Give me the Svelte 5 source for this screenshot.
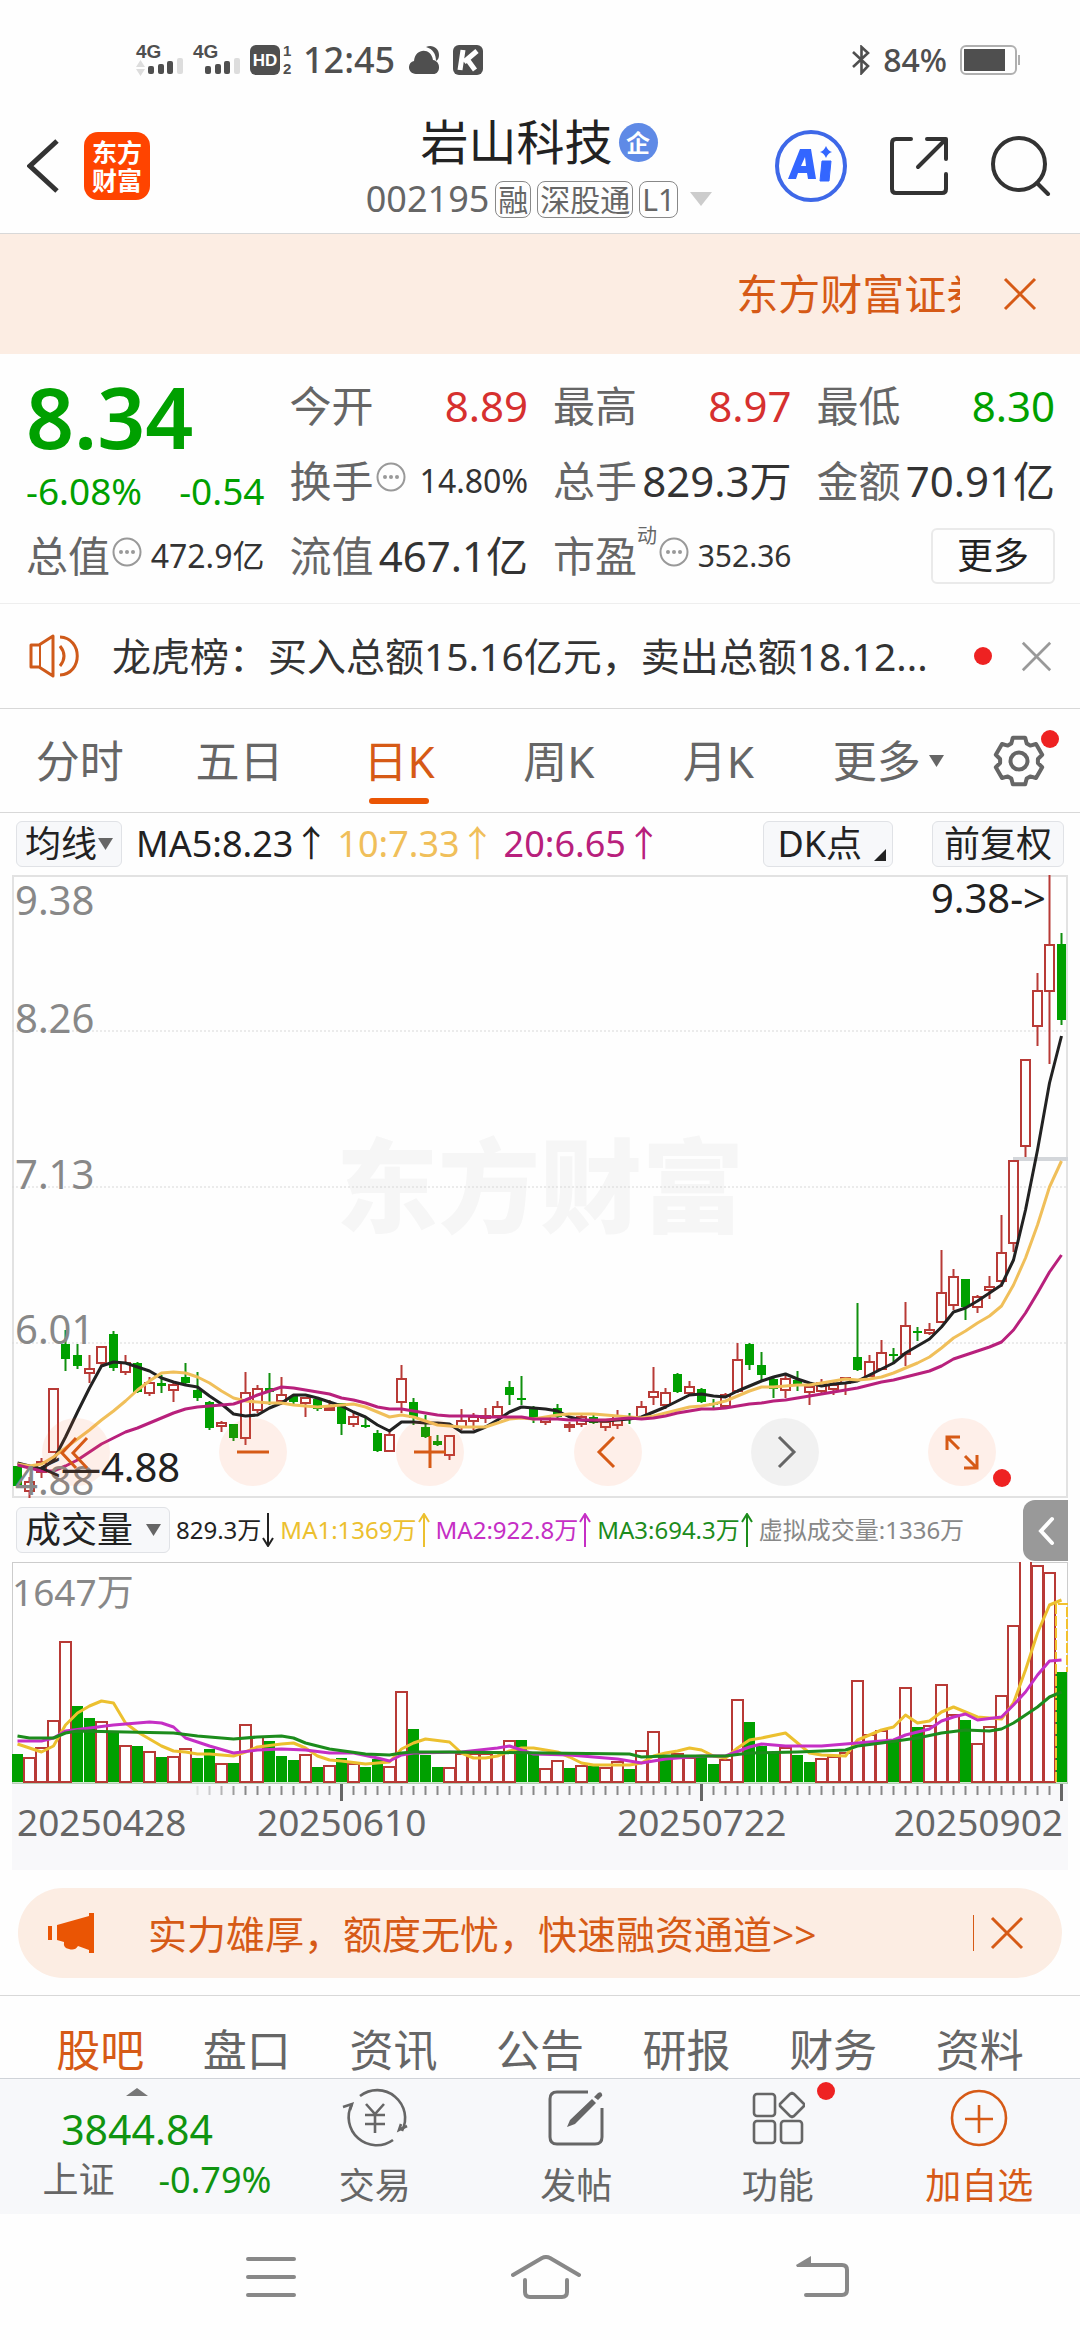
<script>
  let period = '日K';
  let section = '股吧';
  let line = '均线';
  let indicator = '成交量';

  const periods = ['分时', '五日', '日K', '周K', '月K', '更多'];
  const sections = ['股吧', '盘口', '资讯', '公告', '研报', '财务', '资料'];

  const STEP = 12;
  const cx = i => 5.5 + STEP * i;

  // high, body top, body bottom, low (chart units), r = rise, g = fall
  const candles = `
    591 591 611 611 g|602 607 616 623 r|583 587 597 603 r|514 514 577 577 r|455 469 484 496 g|469 480 491 494 g
    480 494 498 508 r|472 472 488 492 r|456 459 493 496 g|480 488 497 500 r|487 488 517 518 g|502 508 518 521 r
    500 508 511 518 g|508 510 515 527 r|488 502 508 511 g|497 515 523 526 g|526 527 553 555 g|546 548 551 557 r
    549 549 563 566 g|497 518 563 570 r|510 514 535 538 r|498 513 517 530 g|502 520 526 530 r|519 521 527 529 g
    522 523 528 542 r|522 524 534 536 g|525 533 535 536 r|528 528 549 560 g|537 542 549 552 r|542 550 552 553 g
    555 558 576 577 g|557 560 576 576 r|490 504 527 538 r|523 527 543 550 g|540 552 562 563 g|560 566 570 571 g
    561 561 580 585 r|534 546 552 555 r|538 542 546 555 r|533 541 543 548 r|526 532 541 543 r|506 512 520 530 g
    501 523 525 530 g|531 533 545 548 g|542 543 547 550 r|529 533 542 543 g|547 550 552 557 r|540 542 549 552 r
    540 542 548 549 g|545 547 552 556 r|535 541 550 554 r|538 543 545 549 g|526 532 542 543 r|492 517 522 530 r
    513 518 530 534 r|498 499 517 518 g|506 512 518 521 r|513 514 527 528 g|524 528 530 533 g|518 520 531 532 r
    468 485 516 518 r|468 469 490 495 g|477 490 500 505 g|502 504 514 523 g|500 504 515 523 r|496 505 511 516 g
    510 512 517 530 r|504 508 516 520 r|507 510 514 520 r|502 503 508 520 r|428 482 495 496 g|480 487 501 502 r
    465 478 494 495 r|473 479 481 487 g|427 451 479 491 r|452 456 458 466 g|448 455 458 460 r|375 418 447 448 r
    394 402 430 435 r|404 404 432 445 g|420 422 432 438 r|401 412 415 424 r|340 378 406 412 r|286 286 368 377 r
    185 185 271 282 r|98 116 151 171 r|0 70 116 189 r|58 69 145 150 g`
    .trim()
    .split(/[|\n]/)
    .map((row, i) => {
      const [high, top, bottom, low, side] = row.trim().split(' ');
      return { x: cx(i), high: +high, top: +top, bottom: +bottom, low: +low, up: side === 'r' };
    });

  const ma5 = [588, 591, 594, 585, 562, 537, 513, 491, 487, 488, 492, 496, 503, 507, 510, 512, 521, 529, 539, 541, 540, 533, 528, 520, 520, 523, 527, 531, 537, 542, 550, 556, 547, 547, 548, 548, 549, 557, 557, 552, 545, 537, 532, 533, 534, 536, 542, 545, 546, 546, 545, 544, 542, 537, 532, 526, 520, 519, 521, 522, 516, 511, 506, 502, 499, 504, 508, 511, 509, 508, 506, 500, 494, 488, 478, 471, 464, 452, 437, 433, 426, 418, 410, 385, 335, 275, 208, 161];
  const ma10 = [589, 591, 589, 582, 573, 564, 555, 545, 536, 526, 515, 506, 498, 497, 498, 502, 508, 516, 523, 526, 527, 528, 528, 530, 531, 532, 531, 530, 529, 532, 537, 542, 540, 542, 546, 550, 551, 552, 552, 552, 548, 544, 543, 544, 542, 540, 539, 539, 539, 540, 541, 542, 543, 541, 538, 535, 532, 531, 529, 526, 521, 516, 512, 512, 511, 510, 510, 508, 506, 504, 505, 504, 502, 498, 493, 488, 482, 473, 463, 456, 448, 441, 431, 410, 383, 350, 312, 286];
  const ma20 = [590, 593, 596, 596, 591, 585, 577, 569, 563, 557, 553, 548, 543, 538, 534, 532, 531, 530, 529, 525, 520, 516, 512, 513, 515, 517, 519, 523, 525, 528, 532, 534, 534, 536, 538, 540, 541, 541, 541, 542, 542, 542, 542, 544, 544, 544, 545, 545, 545, 545, 544, 543, 544, 543, 541, 538, 536, 534, 534, 533, 531, 529, 528, 526, 525, 523, 521, 519, 517, 515, 513, 510, 507, 505, 502, 499, 496, 491, 484, 480, 476, 472, 467, 455, 438, 418, 397, 380];

  const volumeTops = [192, 195, 185, 158, 79, 144, 156, 159, 169, 183, 184, 189, 195, 194, 186, 196, 187, 201, 201, 162, 174, 179, 194, 198, 192, 205, 203, 196, 201, 205, 197, 204, 129, 167, 193, 205, 205, 191, 191, 191, 189, 178, 178, 190, 206, 198, 206, 203, 204, 205, 199, 207, 188, 169, 194, 191, 195, 195, 202, 197, 137, 160, 184, 191, 185, 193, 200, 196, 194, 190, 118, 172, 168, 177, 125, 165, 163, 122, 152, 158, 181, 164, 133, 63, -4, 3, 10, 110];
  const volumeSides = 'grrrrggrgrgrgrrggrgrrgggrgrgrggrrgggrrrrrrggrrgrgrrgrrgrrggrrgggrggrrrrrrgrgrrrgrrrrrrrg';

  // [index, y] pairs
  const vma1 = [[0, 182], [2, 190], [3, 184], [4, 163], [5, 151], [6, 144], [7, 139], [8, 141], [9, 161], [10, 170], [12, 184], [13, 189], [14, 190], [15, 192], [16, 192], [18, 194], [19, 190], [20, 185], [22, 182], [23, 181], [24, 186], [25, 194], [26, 198], [27, 199], [29, 202], [31, 200], [32, 187], [33, 181], [34, 177], [36, 180], [37, 191], [38, 196], [39, 196], [40, 194], [41, 189], [42, 186], [43, 186], [44, 188], [45, 190], [46, 195], [47, 201], [48, 203], [51, 203], [52, 201], [53, 194], [54, 191], [55, 189], [56, 186], [57, 188], [58, 194], [59, 196], [60, 186], [61, 178], [62, 176], [64, 171], [65, 181], [66, 191], [67, 193], [69, 194], [70, 178], [71, 173], [72, 168], [73, 165], [74, 153], [75, 161], [76, 159], [77, 150], [78, 145], [79, 150], [80, 155], [82, 157], [83, 141], [84, 108], [85, 71], [86, 43], [87, 38]];
  const vma2 = [[0, 179], [2, 179], [3, 176], [4, 169], [6, 166], [8, 163], [11, 160], [12, 161], [13, 165], [14, 176], [16, 184], [18, 191], [20, 188], [22, 187], [24, 188], [26, 191], [28, 191], [30, 196], [31, 199], [32, 193], [33, 191], [37, 190], [40, 186], [41, 184], [42, 188], [43, 192], [46, 193], [48, 195], [50, 197], [52, 201], [54, 197], [57, 194], [59, 194], [61, 185], [62, 182], [64, 184], [67, 184], [70, 181], [73, 178], [74, 173], [76, 167], [77, 159], [78, 155], [79, 152], [80, 158], [82, 155], [83, 143], [84, 130], [85, 113], [86, 99], [87, 98]];
  const vma3 = [[0, 174], [1, 176], [3, 176], [4, 171], [5, 169], [13, 171], [15, 174], [18, 177], [20, 175], [22, 174], [23, 176], [24, 181], [26, 187], [29, 192], [31, 193], [32, 191], [33, 190], [36, 190], [44, 191], [51, 192], [52, 195], [54, 194], [59, 194], [61, 191], [65, 190], [69, 188], [70, 184], [72, 181], [75, 176], [77, 171], [79, 168], [81, 169], [82, 167], [83, 161], [84, 153], [85, 145], [86, 135], [87, 130]];

  const points = pairs => pairs.map(([i, y]) => `${cx(i)},${y}`).join(' ');
  const series = values => points(values.map((y, i) => [i, y]));

  const majorTicks = [27, 57, 87];
  const ticks = Array.from({ length: 73 }, (_, n) => n + 15);

  function gear() {
    const out = [];
    for (let k = 0; k < 6; k++) {
      [[-15, 24], [15, 24], [24, 19], [36, 19]].forEach(([deg, r]) => {
        const a = ((k * 60 - 90 + deg) * Math.PI) / 180;
        out.push(`${(26 + r * Math.cos(a)).toFixed(1)},${(26 + r * Math.sin(a)).toFixed(1)}`);
      });
    }
    return out.join(' ');
  }
</script>

{#snippet more()}
  <svg class="hint" viewBox="0 0 30 30" aria-hidden="true">
    <circle cx="15" cy="15" r="13.5" fill="none" stroke="#999" stroke-width="2" />
    <circle cx="9" cy="15" r="2" /><circle cx="15" cy="15" r="2" /><circle cx="21" cy="15" r="2" />
  </svg>
{/snippet}

{#snippet cross()}
  <svg class="cross" viewBox="0 0 34 34" aria-hidden="true">
    <path d="M2 2 32 32M32 2 2 32" fill="none" stroke="currentColor" stroke-width="3" />
  </svg>
{/snippet}

{#snippet arrow(down)}
  <svg class="trend" viewBox="0 0 12 34" aria-hidden="true">
    <path d={down ? 'M6 0V33M1 25 6 33 11 25' : 'M6 34V1M1 9 6 1 11 9'} fill="none" stroke="currentColor" stroke-width="2" />
  </svg>
{/snippet}

{#snippet signal(roaming)}
  <svg class="signal" viewBox="0 0 48 34" aria-hidden="true">
    <text x="0" y="15" font-size="19" font-weight="700" fill="#4f4f4f">4G</text>
    {#if roaming}<path d="M0 24 4.500 17 9 24ZM0 26 4.500 33 9 26Z" fill="#ddd" />{/if}
    <rect x="12" y="23" width="6" height="8" rx="2" fill="#4f4f4f" />
    <rect x="22" y="21" width="6" height="10" rx="2" fill="#4f4f4f" />
    <rect x="31" y="18" width="6" height="13" rx="2" fill="#4f4f4f" />
    <rect x="41" y="15" width="6" height="16" rx="2" fill="#ddd" />
  </svg>
{/snippet}

<div class="app">
  <div class="status">
    <div class="status-side">
      {@render signal(true)}
      {@render signal(false)}
      <svg class="hd" viewBox="0 0 44 34" aria-hidden="true">
        <rect y="2" width="30" height="30" rx="6" fill="#4f4f4f" />
        <text x="15" y="23" font-size="17" font-weight="700" fill="#fff" text-anchor="middle">HD</text>
        <text x="33" y="13" font-size="15" font-weight="700" fill="#4f4f4f">1</text>
        <text x="33" y="31" font-size="15" font-weight="700" fill="#4f4f4f">2</text>
      </svg>
      <span class="clock">12:45</span>
      <svg class="app-icon" viewBox="0 0 30 30" aria-hidden="true">
        <path d="M17 2c6-3 13 1 13 8 0 3-1 5-3 6 0-7-3-12-10-14z" fill="#4f4f4f" />
        <path d="M7 29c-9 0-9-12-2-13C6 3 22 2 24 15c8 1 8 14 0 14z" fill="#4f4f4f" />
      </svg>
      <svg class="app-icon" viewBox="0 0 30 30" aria-hidden="true">
        <rect width="30" height="30" rx="6" fill="#4f4f4f" />
        <path d="M10 5 7 25M24 6 11 17M14 14 22 25" stroke="#fff" stroke-width="5" fill="none" />
      </svg>
    </div>
    <div class="status-side right">
      <svg class="bt" viewBox="0 0 18 30" aria-hidden="true">
        <path d="M1 7 16 21 9.500 28V2L16 8 1 22" fill="none" stroke="#4f4f4f" stroke-width="2.600" />
      </svg>
      <span class="battery-text">84%</span>
      <svg class="battery" viewBox="0 0 60 30" aria-hidden="true">
        <rect x="1" y="1" width="55" height="28" rx="5" fill="#fff" stroke="#b0b0b0" stroke-width="2" />
        <rect x="4" y="4" width="41" height="22" fill="#4f4f4f" />
        <rect x="58" y="10" width="2" height="10" fill="#b0b0b0" />
      </svg>
    </div>
  </div>

  <header>
    <div class="head-left">
      <button aria-label="返回">
        <svg class="back" viewBox="0 0 32 54"><path d="M30 2 3 27 30 52" fill="none" stroke="#333" stroke-width="5" /></svg>
      </button>
      <a class="logo" href="#home">东方<br />财富</a>
    </div>
    <div class="head-mid">
      <h1>岩山科技<span class="badge">企</span></h1>
      <p class="code">
        002195<span class="tag">融</span><span class="tag">深股通</span><span class="tag">L1</span>
        <svg class="caret" viewBox="0 0 22 16" aria-hidden="true"><path d="M0 1H22L11 15Z" fill="#ccc" /></svg>
      </p>
    </div>
    <div class="head-right">
      <button class="ai" aria-label="Ai">
        <svg viewBox="0 0 72 72">
          <circle cx="36" cy="36" r="34" fill="none" stroke="#3e68e8" stroke-width="4" />
          <path d="M13 49 25 19H36L41 49H33L32 43H23L21 49ZM26 36H31L30 27Z" fill="#3366ff" fill-rule="evenodd" />
          <path d="M47 31H56L54 51H45Z" fill="#3366ff" stroke="#3366ff" stroke-linejoin="round" />
          <path d="M51 16Q53 21 57 22 53 23 51 28 49 23 45 22 49 21 51 16Z" fill="#3366ff" />
        </svg>
      </button>
      <button aria-label="分享">
        <svg class="share" viewBox="0 0 58 58">
          <path d="M21 2H6Q2 2 2 6V52Q2 56 6 56H52Q56 56 56 52V37M37 2H56V22M55 3 28 30" fill="none" stroke="#333" stroke-width="4" stroke-linecap="round" stroke-linejoin="round" />
        </svg>
      </button>
      <button aria-label="搜索">
        <svg class="search" viewBox="0 0 60 60">
          <circle cx="28" cy="28" r="26" fill="none" stroke="#333" stroke-width="4" />
          <path d="M46 47 57 58" stroke="#333" stroke-width="4" stroke-linecap="round" />
        </svg>
      </button>
    </div>
  </header>

  <div class="promo">
    <div class="marquee">东方财富证券</div>
    <button aria-label="关闭">{@render cross()}</button>
  </div>

  <section class="quote">
    <div class="price">
      <strong>8.34</strong>
      <div class="change"><span>-6.08%</span><span>-0.54</span></div>
    </div>
    <div class="cell"><span>今开</span><b class="rise">8.89</b></div>
    <div class="cell"><span>最高</span><b class="rise">8.97</b></div>
    <div class="cell"><span>最低</span><b class="fall">8.30</b></div>
    <div class="cell"><span>换手</span>{@render more()}<b class="small">14.80%</b></div>
    <div class="cell"><span>总手</span><b>829.3万</b></div>
    <div class="cell"><span>金额</span><b>70.91亿</b></div>
    <div class="cell"><span>总值</span>{@render more()}<b class="small">472.9亿</b></div>
    <div class="cell"><span>流值</span><b>467.1亿</b></div>
    <div class="cell"><span>市盈</span><i class="sup">动</i>{@render more()}<b class="tiny">352.36</b></div>
    <button class="more">更多</button>
  </section>

  <div class="news">
    <svg class="speaker" viewBox="0 0 52 44" aria-hidden="true">
      <path d="M2 11H10L24 2V42L10 33H2ZM31 12Q39 22 31 32M31 3C54 4 54 40 31 41" fill="none" stroke="#cf5a1a" stroke-width="3" stroke-linejoin="round" />
      <path d="M11 11V33" stroke="#cf5a1a" stroke-width="2" />
    </svg>
    <a href="#news">龙虎榜：买入总额15.16亿元，卖出总额18.12...</a>
    <span class="dot"></span>
    <button aria-label="关闭">{@render cross()}</button>
  </div>

  <nav class="periods">
    {#each periods as name}
      <button class:active={period === name} class:menu-tab={name === '更多'} on:click={() => (period = name)}>
        {name}{#if name === '更多'}<svg class="drop" viewBox="0 0 15 12" aria-hidden="true"><path d="M0 0H15L7.500 12Z" fill="#666" /></svg>{/if}
      </button>
    {/each}
    <button class="settings" aria-label="设置">
      <svg viewBox="0 0 52 52">
        <polygon points={gear()} fill="none" stroke="#666" stroke-width="4" stroke-linejoin="round" />
        <circle cx="26" cy="26" r="8.500" fill="none" stroke="#666" stroke-width="4" />
      </svg>
      <span class="dot"></span>
    </button>
  </nav>

  <div class="legend">
    <label class="picker">
      <select bind:value={line} aria-label="主图指标"><option>均线</option></select>
      <svg class="drop" viewBox="0 0 15 12" aria-hidden="true"><path d="M0 0H15L7.500 12Z" fill="#666" /></svg>
    </label>
    <span class="ma5">MA5:8.23↑</span>
    <span class="ma10">10:7.33↑</span>
    <span class="ma20">20:6.65↑</span>
    <button class="chip dk">DK点<svg viewBox="0 0 12 12" aria-hidden="true"><path d="M12 0V12H0Z" fill="#222" /></svg></button>
    <button class="chip">前复权</button>
  </div>

  <div class="chart">
    <svg viewBox="0 0 1056 623" role="img" aria-label="日K线">
      <text class="watermark" x="324" y="350">东方财富</text>
      <rect x="1" y="1" width="1054" height="621" fill="none" stroke="#e2e2e2" stroke-width="2" />
      {#each [156, 312, 468] as y}
        <path d="M0 {y}H1056" stroke="#d8d8d8" stroke-width="1" stroke-dasharray="2 2" />
      {/each}
      <path d="M1001 284H1056" stroke="#d3d6da" stroke-width="4" />
      {#each candles as c}
        {#if c.up}
          <path d="M{c.x} {c.high}V{c.top}M{c.x} {c.bottom}V{c.low}" stroke="#b83a36" stroke-width="2" />
          <rect x={c.x - 4.5} y={c.top} width="9" height={c.bottom - c.top} fill="none" stroke="#b83a36" stroke-width="2" />
        {:else}
          <path d="M{c.x} {c.high}V{c.low}" stroke="#10900f" stroke-width="2" />
          <rect x={c.x - 4.5} y={c.top} width="9" height={c.bottom - c.top} fill="#00a000" />
        {/if}
      {/each}
      <polyline points={series(ma5)} stroke="#222" />
      <polyline points={series(ma10)} stroke="#f0bf5a" />
      <polyline points={series(ma20)} stroke="#b8207c" />
      <g class="axis">
        <text x="3" y="40">9.38</text>
        <text x="3" y="158">8.26</text>
        <text x="3" y="314">7.13</text>
        <text x="3" y="469">6.01</text>
        <text x="3" y="620">4.88</text>
      </g>
      <g class="mark">
        <text x="1034" y="38" text-anchor="end">9.38-&gt;</text>
        <text x="26" y="607">&lt;—4.88</text>
      </g>
    </svg>
    <div class="tools">
      <button aria-label="最左"><svg viewBox="0 0 68 68"><path d="M34 20 20 35 34 50M45 20 31 35 45 50" /></svg></button>
      <button aria-label="缩小"><svg viewBox="0 0 68 68"><path d="M18 34H50" /></svg></button>
      <button aria-label="放大"><svg viewBox="0 0 68 68"><path d="M18 34H50M34 18V50" /></svg></button>
      <button aria-label="左移"><svg viewBox="0 0 68 68"><path d="M40 19 25 34 40 49" /></svg></button>
      <button class="off" aria-label="右移"><svg viewBox="0 0 68 68"><path d="M28 19 43 34 28 49" /></svg></button>
      <button aria-label="全屏">
        <svg viewBox="0 0 68 68"><path d="M19 32V19H32M19 19 31 31M49 37V50H36M49 50 37 38" /></svg>
        <span class="dot"></span>
      </button>
    </div>
  </div>

  <div class="vol-legend">
    <label class="picker wide">
      <select bind:value={indicator} aria-label="副图指标"><option>成交量</option></select>
      <svg class="drop" viewBox="0 0 15 12" aria-hidden="true"><path d="M0 0H15L7.500 12Z" fill="#666" /></svg>
    </label>
    <span>829.3万{@render arrow(true)}</span>
    <span class="v1">MA1:1369万{@render arrow(false)}</span>
    <span class="v2">MA2:922.8万{@render arrow(false)}</span>
    <span class="v3">MA3:694.3万{@render arrow(false)}</span>
    <span class="virtual">虚拟成交量:1336万</span>
    <button class="drawer" aria-label="展开">
      <svg viewBox="0 0 45 61"><path d="M29 19 18 31 29 43" fill="none" stroke="#fff" stroke-width="4" stroke-linecap="round" /></svg>
    </button>
  </div>

  <div class="volume">
    <svg viewBox="0 0 1056 222" role="img" aria-label="成交量">
      <rect x="0.500" y="0.500" width="1055" height="221" fill="none" stroke="#ccc" />
      <path d="M0 221H1056" stroke="#9fce9f" />
      {#each volumeTops as top, i}
        {#if volumeSides[i] === 'r'}
          <rect x={cx(i) - 5.5} y={top + 1} width="11" height={219 - top} fill="#fff" stroke="#b83a36" stroke-width="2" />
        {:else}
          <rect x={cx(i) - 5.5} y={top} width="11" height={220 - top} fill="#00a000" />
        {/if}
      {/each}
      <path d="M1044 220V42H1055V110" fill="none" stroke="#f2c12e" stroke-width="2" stroke-dasharray="10 2" />
      <polyline points={points(vma1)} stroke="#ecc02f" />
      <polyline points={points(vma2)} stroke="#c52fc5" />
      <polyline points={points(vma3)} stroke="#1c8c1c" />
      <text class="vol-max" x="0" y="44">1647万</text>
    </svg>
    <svg class="dates" viewBox="0 0 1056 86">
      {#each ticks as i}
        {#if majorTicks.includes(i)}
          <path d="M{cx(i)} 0V17" stroke="#666" stroke-width="3" />
        {:else}
          <path d="M{cx(i)} 2V11" stroke="#888" stroke-width="2" opacity={Math.min(1, (i - 14) / 5)} />
        {/if}
      {/each}
      <text x="5" y="52">20250428</text>
      <text x="245" y="52">20250610</text>
      <text x="605" y="52">20250722</text>
      <text x="1051" y="52" text-anchor="end">20250902</text>
    </svg>
  </div>

  <div class="notice">
    <svg class="horn" viewBox="0 0 46 40" aria-hidden="true">
      <path d="M0 13H4V27H0ZM9 12 41 3V0H46V40H41V37L30 33Q27 38 21 36 15 35 16 29L9 27Z" fill="#ea5504" />
    </svg>
    <a href="#margin">实力雄厚，额度无忧，快速融资通道&gt;&gt;</a>
    <button aria-label="关闭">{@render cross()}</button>
  </div>

  <nav class="sections">
    {#each sections as name}
      <button class:active={section === name} on:click={() => (section = name)}>{name}</button>
    {/each}
  </nav>

  <footer>
    <button class="index">
      <svg class="up" viewBox="0 0 22 8" aria-hidden="true"><path d="M0 8 11 0 22 8Z" fill="#777" /></svg>
      <span class="points">3844.84</span>
      <span class="row"><span>上证</span><em>-0.79%</em></span>
    </button>
    <button class="item">
      <svg viewBox="0 0 66 60" fill="none" stroke="#666" stroke-width="2.600">
        <path d="M18 8A28 28 0 0 1 60 43M51 52A28 28 0 0 1 10 16" />
        <path d="M1 19 10 16 8 22M65 38 57 42 59 36M24 16 33 26 42 16M23 27H43M23 36H43M33 26V45" />
      </svg>
      交易
    </button>
    <button class="item">
      <svg viewBox="0 0 56 60">
        <path d="M40 4H9Q2 4 2 11V49Q2 56 9 56H47Q54 56 54 49V20" fill="none" stroke="#666" stroke-width="3" />
        <path d="M44 11 48 15 27 36 19 39 22 32ZM46 9 50 5Q53 3 54 6 55 8 53 9L50 12Z" fill="#666" />
      </svg>
      发帖
    </button>
    <button class="item">
      <svg viewBox="0 0 54 60" fill="none" stroke="#666" stroke-width="2.600" stroke-linejoin="round">
        <rect x="3" y="6" width="21" height="22" rx="3" /><rect x="3" y="33" width="21" height="22" rx="3" /><rect x="30" y="33" width="21" height="22" rx="3" />
        <path d="M39 6 41 5 43 6 53 16V18L43 28 41 29 39 28 29 18V16Z" />
      </svg>
      功能
      <span class="dot"></span>
    </button>
    <button class="item add">
      <svg viewBox="0 0 60 60" fill="none" stroke="#d65a16" stroke-width="2.600">
        <circle cx="30" cy="30" r="27" /><path d="M16 31H44M30 17V45" />
      </svg>
      加自选
    </button>
  </footer>

  <div class="system">
    <button aria-label="菜单"><svg class="menu" viewBox="0 0 50 42"><path d="M2 3H48M2 21H48M2 39H48" /></svg></button>
    <button aria-label="主页"><svg class="home" viewBox="0 0 70 44"><path d="M2 20 31 3Q35 1 39 3L68 20M14 25V37Q14 42 19 42H51Q56 42 56 37V25" /></svg></button>
    <button aria-label="后退"><svg class="undo" viewBox="0 0 54 44"><path d="M8 10H46Q51 10 51 15V35Q51 40 46 40H10" /><path class="tip" d="M0 10 15 1V12H1Z" /></svg></button>
  </div>
</div>

<style>
  :global(body) {
    background: #fefefe;
  }

  .app {
    color: #222;
    font-family: 'Noto Sans', 'Noto Sans CJK SC', sans-serif;
    font-size: 36px;
    line-height: 1;
  }

  button {
    background: none;
    border: none;
    color: inherit;
    cursor: pointer;
    font: inherit;
    margin: 0;
    padding: 0;
  }

  a {
    color: inherit;
    text-decoration: none;
  }

  svg {
    display: block;
    flex: none;
  }

  .dot {
    background: #ee2222;
    border-radius: 50%;
    flex: none;
    height: 18px;
    width: 18px;
  }

  .cross {
    width: 34px;
  }

  .drop {
    width: 15px;
  }

  .status {
    align-items: center;
    box-sizing: border-box;
    color: #4f4f4f;
    display: flex;
    font-weight: 500;
    height: 114px;
    justify-content: space-between;
    padding: 6px 60px 0 136px;
  }

  .status-side {
    align-items: center;
    display: flex;
    gap: 9px;
  }

  .right {
    gap: 13px;
  }

  .signal,
  .hd {
    font-family: 'Liberation Sans', sans-serif;
    overflow: visible;
  }

  .signal {
    width: 48px;
  }

  .hd {
    width: 44px;
  }

  .clock {
    margin-right: 5px;
  }

  .app-icon {
    margin-right: 5px;
    width: 30px;
  }

  .bt {
    width: 18px;
  }

  .battery-text {
    font-size: 32px;
  }

  .battery {
    width: 60px;
  }

  header {
    align-items: center;
    border-bottom: 1px solid #d8d8d8;
    display: grid;
    grid-template-columns: 1fr auto 1fr;
    padding: 0 29px 15px 27px;
  }

  .head-left,
  .head-right {
    align-items: center;
    display: flex;
  }

  .head-left {
    gap: 25px;
  }

  .head-right {
    gap: 43px;
    justify-content: flex-end;
  }

  .back {
    width: 32px;
  }

  .logo {
    background: #ff4400;
    border-radius: 14px;
    color: #fff;
    font-size: 25px;
    font-weight: 700;
    line-height: 28px;
    padding: 6px 8px;
  }

  .ai svg {
    width: 72px;
  }

  .share {
    width: 58px;
  }

  .search {
    width: 60px;
  }

  h1 {
    align-items: center;
    display: flex;
    font-size: 48px;
    font-weight: 400;
    gap: 6px;
    height: 56px;
    justify-content: center;
    margin: 0 0 10px;
  }

  .badge {
    background: #5f8ae6;
    border-radius: 50%;
    color: #fff;
    font-size: 24px;
    font-weight: 700;
    line-height: 39px;
    text-align: center;
    width: 39px;
  }

  .code {
    align-items: center;
    color: #666;
    display: flex;
    gap: 6px;
    height: 38px;
    margin: 0;
  }

  .tag {
    border: 1px solid #888;
    border-radius: 8px;
    font-size: 30px;
    line-height: 35px;
    padding: 0 2px;
  }

  .caret {
    margin-left: 6px;
    width: 22px;
  }

  .promo {
    align-items: center;
    background: #fcede3;
    color: #d65a16;
    display: flex;
    height: 120px;
    padding-right: 43px;
  }

  .marquee {
    flex: 1;
    font-size: 42px;
    line-height: 60px;
    margin-right: 43px;
    overflow: hidden;
    padding-left: 71%;
    white-space: nowrap;
    width: 0;
  }

  .quote {
    border-bottom: 1px solid #eee;
    column-gap: 25px;
    display: grid;
    grid-template-columns: repeat(4, 1fr);
    grid-template-rows: repeat(3, 75px);
    padding: 14px 25px 10px 26px;
  }

  .price {
    color: #00a000;
    grid-row: span 2;
  }

  .price strong {
    display: block;
    font-size: 84px;
    font-weight: 600;
    line-height: 98px;
  }

  .change {
    display: flex;
    font-size: 37px;
    justify-content: space-between;
    line-height: 50px;
  }

  .cell {
    align-items: center;
    display: flex;
    font-size: 42px;
    white-space: nowrap;
  }

  .cell span {
    color: #666;
  }

  .cell b {
    color: #333;
    font-weight: 400;
    margin-left: auto;
  }

  .cell .rise {
    color: #d6302f;
  }

  .cell .fall {
    color: #00a000;
  }

  .cell .small {
    font-size: 32px;
  }

  .cell .tiny {
    font-size: 30px;
  }

  .sup {
    align-self: flex-start;
    color: #666;
    font-size: 20px;
    font-style: normal;
    padding-top: 8px;
  }

  .hint {
    fill: #999;
    margin: -8px 0 0 2px;
    width: 30px;
  }

  .more {
    align-self: center;
    border: 2px solid #eaeaea;
    border-radius: 6px;
    height: 56px;
    justify-self: end;
    width: 124px;
  }

  .news {
    align-items: center;
    border-bottom: 1px solid #d8d8d8;
    color: #333;
    display: flex;
    font-size: 39px;
    height: 104px;
    padding: 0 28px 0 29px;
  }

  .news a {
    flex: 1;
    margin-left: 31px;
    overflow: hidden;
    line-height: 56px;
    white-space: nowrap;
  }

  .news button {
    color: #999;
    margin-left: 29px;
  }

  .news .cross {
    width: 31px;
  }

  .speaker {
    width: 52px;
  }

  .periods {
    border-bottom: 1px solid #d8d8d8;
    color: #666;
    display: grid;
    font-size: 44px;
    grid-template-columns: repeat(6, 1fr) 122px;
    height: 103px;
  }

  .periods button {
    align-items: center;
    display: flex;
    gap: 8px;
    justify-content: center;
    position: relative;
  }

  .periods .menu-tab {
    padding-left: 20px;
  }

  .periods .active,
  .sections .active {
    color: #d65a16;
  }

  .periods .active::after {
    background: #ea5504;
    border-radius: 3px;
    bottom: 8px;
    content: '';
    height: 6px;
    left: calc(50% - 30px);
    position: absolute;
    width: 60px;
  }

  .settings svg {
    width: 52px;
  }

  .settings .dot {
    position: absolute;
    right: 21px;
    top: 21px;
  }

  .legend {
    align-items: center;
    display: flex;
    height: 62px;
    padding: 0 16px;
  }

  .picker,
  .chip {
    align-items: center;
    background: #f7f8fa;
    border: 1px solid #e0e2e6;
    border-radius: 6px;
    box-sizing: border-box;
    display: flex;
    height: 46px;
    padding: 0 8px;
  }

  select {
    appearance: none;
    background: none;
    border: none;
    color: inherit;
    font: inherit;
    height: 44px;
    padding: 0;
  }

  .ma5 {
    margin-left: 14px;
  }

  .ma10 {
    color: #f0bf5a;
    margin-left: 8px;
  }

  .ma20 {
    color: #b8207c;
    margin-left: 8px;
  }

  .chip {
    margin-left: 39px;
    padding: 0 11px;
  }

  .dk {
    gap: 12px;
    margin-left: auto;
    padding: 0 6px 0 13px;
  }

  .dk svg {
    align-self: flex-end;
    margin-bottom: 5px;
    width: 12px;
  }

  .chart,
  .volume {
    margin: 0 12px;
    position: relative;
  }

  .chart > svg,
  .volume > svg {
    width: 100%;
  }

  polyline {
    fill: none;
    stroke-linejoin: round;
    stroke-width: 3;
  }

  .watermark {
    fill: #f6f6f6;
    font-size: 102px;
    font-weight: 900;
  }

  .axis {
    fill: #888;
    font-size: 40px;
  }

  .mark {
    fill: #222;
    font-size: 40px;
  }

  .tools {
    bottom: 12px;
    display: flex;
    justify-content: space-between;
    left: 30px;
    position: absolute;
    right: 72px;
  }

  .tools button {
    background: rgba(255, 110, 50, 0.1);
    border-radius: 50%;
    height: 68px;
    position: relative;
    width: 68px;
  }

  .tools .off {
    background: rgba(0, 0, 0, 0.05);
  }

  .tools path {
    fill: none;
    stroke: #d65a16;
    stroke-width: 3;
  }

  .tools .off path {
    stroke: #666;
  }

  .tools .dot {
    bottom: -1px;
    position: absolute;
    right: -15px;
  }

  .vol-legend {
    align-items: center;
    display: flex;
    font-size: 24px;
    gap: 6px;
    height: 64px;
    padding: 0 12px 0 16px;
    white-space: nowrap;
  }

  .vol-legend span {
    align-items: center;
    display: flex;
    gap: 1px;
  }

  .wide {
    font-size: 36px;
    gap: 12px;
  }

  .trend {
    width: 12px;
  }

  .v1 {
    color: #ecc02f;
  }

  .v2 {
    color: #c52fc5;
  }

  .v3 {
    color: #1c8c1c;
  }

  .virtual {
    color: #888;
  }

  .drawer {
    background: #999;
    border-radius: 12px 0 0 12px;
    margin-left: auto;
  }

  .drawer svg {
    width: 45px;
  }

  .vol-max {
    fill: #888;
    font-size: 37px;
  }

  .dates {
    background: #f8f8fa;
    fill: #666;
    font-size: 37px;
  }

  .notice {
    align-items: center;
    background: #fcede3;
    border-radius: 45px;
    color: #d65a16;
    display: flex;
    font-size: 39px;
    height: 90px;
    margin: 18px 18px 17px;
    padding: 0 38px 0 30px;
  }

  .horn {
    width: 46px;
  }

  .notice a {
    flex: 1;
    margin-left: 54px;
  }

  .notice button {
    border-left: 1px solid #d65a16;
    padding: 1px 0 1px 16px;
  }

  .sections {
    border-top: 1px solid #d8d8d8;
    color: #666;
    display: grid;
    font-size: 44px;
    grid-template-columns: repeat(7, 1fr);
    line-height: 56px;
    padding: 26px 27px 0;
  }

  footer {
    background: #f7f8fa;
    border-top: 1px solid #d0d3d8;
    color: #666;
    display: grid;
    grid-template-columns: 274px repeat(4, 1fr);
    height: 135px;
  }

  .index {
    align-items: center;
    display: flex;
    flex-direction: column;
    padding-top: 9px;
  }

  .up {
    width: 22px;
  }

  .points {
    color: #109410;
    font-size: 41px;
    line-height: 66px;
  }

  .row {
    display: flex;
    gap: 44px;
    line-height: 36px;
    padding-left: 40px;
  }

  .row em {
    color: #109410;
    font-style: normal;
  }

  .item {
    align-items: center;
    display: flex;
    flex-direction: column;
    gap: 20px;
    padding-top: 9px;
    position: relative;
  }

  .item svg {
    height: 60px;
  }

  .item .dot {
    left: calc(50% + 39px);
    position: absolute;
    top: 3px;
  }

  .add {
    color: #d65a16;
  }

  .system {
    align-items: center;
    display: flex;
    height: 126px;
    justify-content: space-between;
    padding: 0 230px 0 246px;
  }

  .system path {
    fill: none;
    stroke: #888;
    stroke-linecap: round;
    stroke-width: 4;
  }

  .system .tip {
    fill: #888;
    stroke: none;
  }

  .menu {
    width: 50px;
  }

  .home {
    width: 70px;
  }

  .undo {
    width: 54px;
  }
</style>
